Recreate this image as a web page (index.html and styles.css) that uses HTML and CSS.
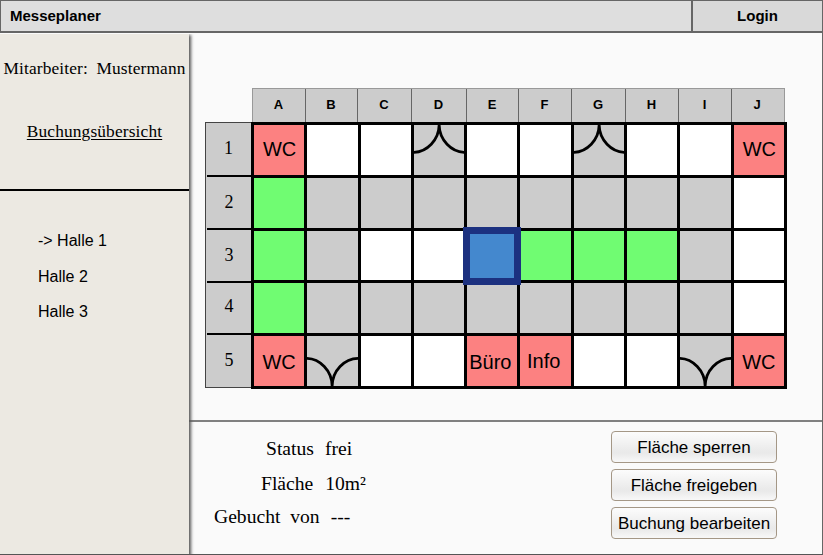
FILE: index.html
```html
<!DOCTYPE html>
<html lang="de">
<head>
<meta charset="utf-8">
<title>Messeplaner</title>
<link rel="stylesheet" href="styles.css">
</head>
<body>
<div class="window">
  <header class="topbar">
    <div class="brand">Messeplaner</div>
    <div class="login">Login</div>
  </header>
  <div class="body">
    <aside class="sidebar">
      <div class="user">
        <div class="employee"><span>Mitarbeiter:</span><span>Mustermann</span></div>
        <a class="overview">Buchungsübersicht</a>
      </div>
      <nav class="halls">
        <div>-&gt; Halle 1</div>
        <div>Halle 2</div>
        <div>Halle 3</div>
      </nav>
    </aside>
    <main class="main">
      <section class="plan">
        <div class="cols">
          <div>A</div><div>B</div><div>C</div><div>D</div><div>E</div><div>F</div><div>G</div><div>H</div><div>I</div><div>J</div>
        </div>
        <div class="rows">
          <div>1</div><div>2</div><div>3</div><div>4</div><div>5</div>
        </div>
        <div class="map">
          <div class="cell room">WC</div><div class="cell free"></div><div class="cell free"></div>
          <div class="cell"><svg class="door" viewBox="0 0 51 50"><path d="M-1 27.5C13 27.5 25.5 15 25.5 -1C25.5 15 38 27.5 52 27.5"/></svg></div>
          <div class="cell free"></div><div class="cell free"></div>
          <div class="cell"><svg class="door" viewBox="0 0 51 50"><path d="M-1 27.5C13 27.5 25.5 15 25.5 -1C25.5 15 38 27.5 52 27.5"/></svg></div>
          <div class="cell free"></div><div class="cell free"></div><div class="cell room">WC</div>

          <div class="cell open"></div><div class="cell"></div><div class="cell"></div><div class="cell"></div><div class="cell"></div><div class="cell"></div><div class="cell"></div><div class="cell"></div><div class="cell"></div><div class="cell free"></div>

          <div class="cell open"></div><div class="cell"></div><div class="cell free"></div><div class="cell free"></div><div class="cell selected"></div><div class="cell open"></div><div class="cell open"></div><div class="cell open"></div><div class="cell"></div><div class="cell free"></div>

          <div class="cell open"></div><div class="cell"></div><div class="cell"></div><div class="cell"></div><div class="cell"></div><div class="cell"></div><div class="cell"></div><div class="cell"></div><div class="cell"></div><div class="cell free"></div>

          <div class="cell room low">WC</div>
          <div class="cell"><svg class="door" viewBox="0 0 51 50"><path d="M-1 22.5C13 22.5 25.5 35 25.5 51C25.5 35 38 22.5 52 22.5"/></svg></div>
          <div class="cell free"></div><div class="cell free"></div><div class="cell room low office">Büro</div><div class="cell room low info">Info</div><div class="cell free"></div><div class="cell free"></div>
          <div class="cell"><svg class="door" viewBox="0 0 51 50"><path d="M-1 22.5C13 22.5 25.5 35 25.5 51C25.5 35 38 22.5 52 22.5"/></svg></div>
          <div class="cell room low">WC</div>
        </div>
      </section>
      <section class="details">
        <dl class="facts">
          <div class="fact status"><dt>Status</dt><dd>frei</dd></div>
          <div class="fact area"><dt>Fläche</dt><dd>10m²</dd></div>
          <div class="fact booked"><dt>Gebucht von</dt><dd>---</dd></div>
        </dl>
        <div class="actions">
          <button>Fläche sperren</button>
          <button>Fläche freigeben</button>
          <button>Buchung bearbeiten</button>
        </div>
      </section>
    </main>
  </div>
</div>
</body>
</html>
```

FILE: styles.css
```css
* { box-sizing: border-box; }
body { margin: 0; font-family: "Liberation Sans", Arial, sans-serif; color: #000; }
.window {
  width: 823px; height: 555px; overflow: hidden;
  display: flex; flex-direction: column;
  background: #fafafa;
  border-right: 1px solid #666; border-bottom: 1px solid #555;
}
.topbar {
  height: 33px; flex: none; display: flex;
  background: #dedede;
  border: solid #666; border-width: 1px 0 2px 1px;
  font-weight: bold; font-size: 15px; line-height: 30px;
}
.brand { flex: 1; padding-left: 9px; }
.login { width: 131px; border-left: 2px solid #666; background: #d9d9d9; text-align: center; }
.body { flex: 1; display: flex; min-height: 0; }
.sidebar {
  width: 189px; flex: none; margin-top: 1px; margin-bottom: -1px;
  background: #ece9e2;
  box-shadow: 1px 2px 3px 1px #555;
  clip-path: inset(0 -6px 0 0);
  position: relative;
}
.user {
  height: 157px; border-bottom: 2px solid #000;
  font: 17.33px/22px "Liberation Serif", "Times New Roman", serif;
  display: flex; flex-direction: column; align-items: center;
  padding-top: 24px; gap: 41px; letter-spacing: .15px;
}
.employee { display: flex; gap: 8.5px; white-space: nowrap; }
.overview { text-decoration: underline; text-underline-offset: 2px; }
.halls {
  padding: 40px 0 0 38px; display: grid; grid-auto-rows: 35.5px;
  font-size: 16px; line-height: 20px;
}
.main { flex: 1; min-width: 0; display: flex; flex-direction: column; }
.plan {
  height: 387px; flex: none; padding: 55px 0 0 16px;
  display: grid; grid-template: 34px 267px / 46px 536px;
}
.cols {
  grid-column: 2; display: grid;
  grid-template-columns: 52px 52px 54px 55px 52px 53px 54px 53px 53px 1fr;
  margin: 0 2px 0 1px;
  background: #ccc; border: 1px solid #999; border-bottom: 0;
  font-weight: bold; font-size: 13px; line-height: 32px; text-align: center;
}
.cols div { padding-right: 1px; }
.cols div + div { border-left: 1px solid #666; }
.cols div:last-child { padding-right: 2px; }
.rows {
  grid-column: 1; display: grid; grid-template-rows: 52px 53px 53px 52px 1fr;
  height: 266px; background: #ccc; border: 1px solid #444; border-right: 0;
  font: 18px/50px "Liberation Serif", serif; text-align: center;
}
.rows div + div { border-top: 2px solid #000; margin-left: 1px; }
.rows div:nth-child(4) { line-height: 47px; }
.map {
  display: grid; grid-template: repeat(5, 1fr) / repeat(10, 1fr);
  gap: 3px; padding: 3px; background: #000;
}
.cell { background: #ccc; min-width: 0; min-height: 0; }
.free { background: #fff; }
.open { background: #70fc72; }
.room { background: #fc8181; font-size: 20px; line-height: 49px; text-align: center; padding-left: 1px; }
.low { line-height: 53px; padding-left: 0; }
.office { text-indent: -4px; }
.info { text-indent: -4px; line-height: 51px; }
.selected { background: #4488ce; margin: -4px -4px -5px; border: 7px solid #1c3180; z-index: 1; }
.door { display: block; width: 100%; height: 100%; }
.door path { fill: none; stroke: #000; stroke-width: 2.8; }
.details {
  flex: 1; border-top: 2px solid #808080;
  display: flex; justify-content: space-between; padding: 9px 45px 0 25px;
}
.facts { margin: 0; font: 19.6px/24px "Liberation Serif", serif; }
.fact { display: flex; }
.fact dd { margin: 0 0 0 11px; }
.area dd { margin-left: 12px; }
.status { padding: 6px 0 0 52px; }
.area { padding: 11px 0 0 47px; }
.booked { padding: 9px 0 0; word-spacing: 5px; }
.actions { display: flex; flex-direction: column; gap: 6px; }
.actions button {
  width: 166px; height: 32px; padding: 1px 0 0;
  font: 17px "Liberation Sans", Arial, sans-serif; color: #000; white-space: nowrap;
  border: 1px solid #a49786; border-radius: 4px;
  background: linear-gradient(#fcfcfc, #ebebeb 60%, #e9e9e9 70%, #f8f8f8);
}
```
